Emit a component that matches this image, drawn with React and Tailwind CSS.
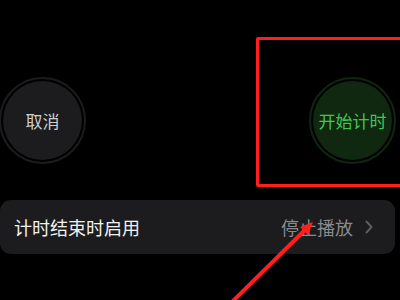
function TimerButton({ label, ring, fill, text }) {
  return (
    <div className={`w-[87px] h-[87px] rounded-full border-2 ${ring} p-[2px]`}>
      <div className={`w-full h-full rounded-full ${fill} flex items-center justify-center`}>
        <span className={`text-[17px] ${text}`}>{label}</span>
      </div>
    </div>
  );
}

export default function App() {
  return (
    <div
      className="relative w-[400px] h-[300px] bg-black overflow-hidden"
      style={{ fontFamily: '"Noto Sans CJK SC", "Noto Sans", sans-serif' }}
    >
      <div className="flex justify-between items-center pt-[77px] pr-[4px]">
        <div className="-ml-[1px]">
          <TimerButton label="取消" ring="border-[#1c1c1e]" fill="bg-[#1c1c1e]" text="text-[#cfcfcf]" />
        </div>
        <TimerButton label="开始计时" ring="border-[#0f2612]" fill="bg-[#10280f]" text="text-[#3dc75a]" />
      </div>

      <div className="mt-[36px] mr-[5px] h-[54px] rounded-[11px] bg-[#1c1c1e] flex items-center pl-[14px] pr-[22px]">
        <span className="text-[18px] text-[#f2f2f2] flex-1">计时结束时启用</span>
        <span className="text-[18px] text-[#8a8a8e]">停止播放</span>
        <svg width="8" height="14" viewBox="0 0 8 14" className="ml-[12px]">
          <path d="M1.5 1.5 L6.5 7 L1.5 12.5" fill="none" stroke="#5c5c60" strokeWidth="2" strokeLinecap="round" strokeLinejoin="round" />
        </svg>
      </div>

      <div className="absolute left-[256px] top-[37px] w-[160px] h-[150px] border-[3px] border-[#ff1f1f] rounded-[2px]" />

      <svg className="absolute left-0 top-0" width="400" height="300" viewBox="0 0 400 300">
        <line x1="308" y1="227" x2="230" y2="304" stroke="#ff1f1f" strokeWidth="4" />
        <path d="M313 222 L300 227 L308 235 Z" fill="#ff1f1f" />
      </svg>
    </div>
  );
}
